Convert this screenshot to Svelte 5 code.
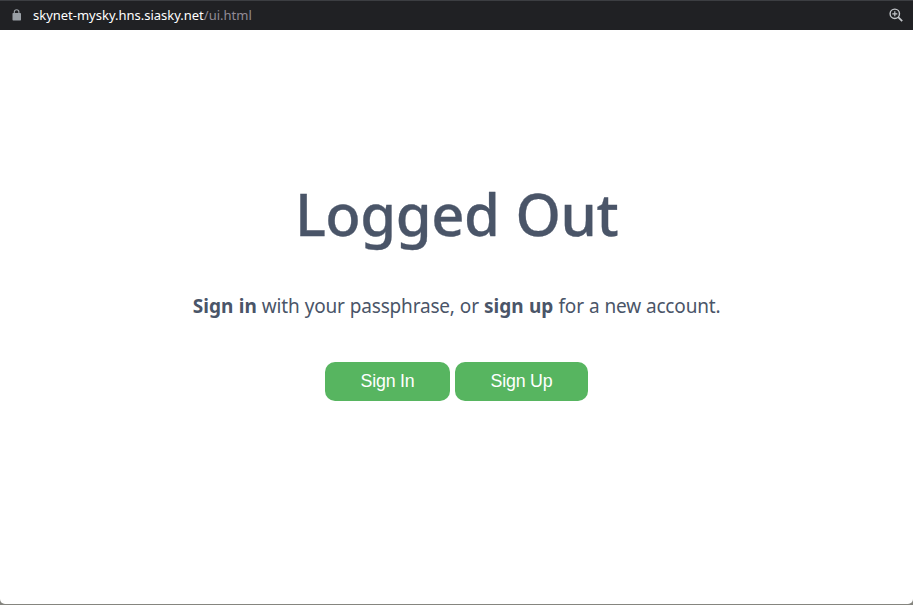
<script>
  const host = 'skynet-mysky.hns.siasky.net';
  const path = '/ui.html';
  const actions = ['Sign In', 'Sign Up'];
</script>

<div class="window">
  <header>
    <svg class="lock" width="9" height="12" viewBox="0 0 9 12" aria-hidden="true">
      <path d="M2.3 5V3a2.3 2.3 0 0 1 4.6 0v2" fill="none" stroke="#9aa0a6" stroke-width="1.1" />
      <rect x="0.5" y="4" width="8.5" height="7.5" rx="0.7" fill="#9aa0a6" />
    </svg>
    <span class="url"><span class="host">{host}</span><span class="path">{path}</span></span>
    <svg class="zoom" width="15" height="15" viewBox="0 0 15 15" fill="none" stroke="#c3c6ca" aria-hidden="true">
      <circle cx="5.8" cy="5.8" r="4.7" stroke-width="1.4" />
      <path d="M5.8 3.3v5M3.3 5.8h5" stroke-width="1.2" />
      <path d="M9.2 9.2l4 4" stroke-width="1.8" />
    </svg>
  </header>
  <main>
    <h1>Logged Out</h1>
    <p><strong>Sign in</strong> with your passphrase, or <strong>sign up</strong> for a new account.</p>
    <div class="actions">
      {#each actions as label}
        <button>{label}</button>
      {/each}
    </div>
  </main>
</div>

<style>
  :global(body) { background: #85857f; overflow: hidden; }
  .window {
    height: 604px;
    display: flex;
    flex-direction: column;
    background: #fff;
    border-radius: 0 0 5px 5px;
    overflow: hidden;
    font-family: 'Noto Sans', 'Open Sans', sans-serif;
  }
  header {
    box-sizing: border-box;
    height: 30px;
    flex: none;
    display: flex;
    align-items: center;
    padding: 0 9px 0 12px;
    background: #202124;
    border-top: 1px solid #3c3e42;
  }
  .lock { flex: none; margin-top: -1px; }
  .url {
    margin: -2px 0 0 12px;
    flex: 1;
    font-size: 13px;
    line-height: 18px;
    white-space: nowrap;
  }
  .host { color: #fff; letter-spacing: -0.01px; }
  .path { color: #918b96; }
  .zoom { flex: none; }
  main {
    display: flex;
    flex-direction: column;
    align-items: center;
    color: #4a5568;
  }
  h1 {
    margin: 144px 0 0;
    font-size: 58px;
    font-weight: 500;
    line-height: 80px;
    letter-spacing: -0.5px;
    word-spacing: 1.5px;
    white-space: nowrap;
    -webkit-text-stroke: 0.3px #4a5568;
  }
  p {
    margin: 37px 0 0;
    font-size: 19px;
    font-weight: 400;
    line-height: 30px;
    letter-spacing: -0.18px;
    word-spacing: 0.3px;
    white-space: nowrap;
  }
  strong { font-weight: 700; letter-spacing: 0.05px; }
  .actions { display: flex; gap: 5px; margin-top: 41px; }
  button {
    height: 39px;
    padding: 0 35.5px;
    border: 0;
    border-radius: 10px;
    background: #57b560;
    color: #fff;
    font: 17.8px 'Liberation Sans', Arial, sans-serif;
    letter-spacing: -0.2px;
    white-space: nowrap;
  }
</style>
